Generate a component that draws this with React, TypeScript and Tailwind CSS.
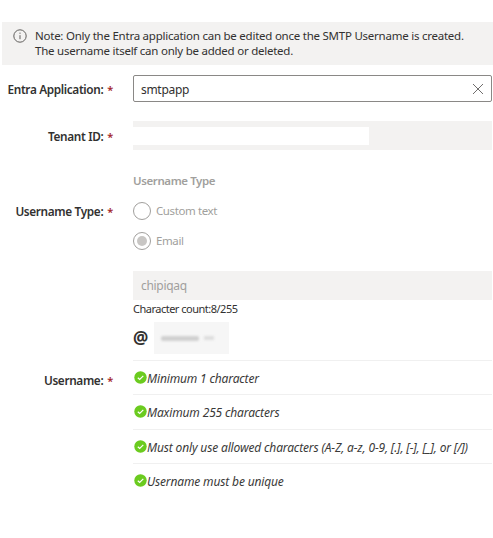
const font = "[font-family:'Noto_Sans',sans-serif]";

const Label = ({ text }: { text: string }) => (
  <div className="w-[113px] shrink-0 flex justify-end items-baseline gap-[4px] text-[11.8px] font-semibold tracking-[-0.35px] text-[#323130] whitespace-nowrap">
    <span>{text}</span>
    <span className="text-[#a4262c] text-[11px]">*</span>
  </div>
);

const Check = () => (
  <svg width="13" height="13" viewBox="0 0 13 13" className="shrink-0">
    <circle cx="6.5" cy="6.5" r="6.2" fill="#6bcb1f" />
    <path d="M3.8 6.7l1.9 1.8 3.6-3.6" fill="none" stroke="#fff" strokeWidth="1.2" />
  </svg>
);

const rules = [
  "Minimum 1 character",
  "Maximum 255 characters",
  "Must only use allowed characters (A-Z, a-z, 0-9, [.], [-], [_], or [/])",
  "Username must be unique",
];

export default function App() {
  return (
    <div className={`${font} w-[493px] h-[538px] bg-white overflow-hidden pt-[22px] text-[12px] leading-[16px]`}>
      <div className="ml-[2px] h-[43px] bg-[#f3f2f1] flex items-start pl-[11px] pt-[6px] text-[11.5px] leading-[15px] tracking-[-0.24px] text-[#323130]">
        <svg width="14" height="14" viewBox="0 0 14 14" className="shrink-0 mt-[1px] mr-[8px]" fill="none" stroke="#605e5c">
          <circle cx="7" cy="7" r="6.2" />
          <path d="M7 6.2v4M7 3.6v1.2" />
        </svg>
        <div>
          <div className="whitespace-nowrap">Note: Only the Entra application can be edited once the SMTP Username is created.</div>
          <div className="whitespace-nowrap">The username itself can only be added or deleted.</div>
        </div>
      </div>

      <div className="flex items-center mt-[10px] gap-[20px] pr-[1px]">
        <div className="pt-[2px]">
          <Label text="Entra Application:" />
        </div>
        <div className="flex-1 h-[27px] border border-[#8a8886] rounded-[2px] flex items-center justify-between pl-[7px] pr-[7px] text-[#323130] tracking-[-0.3px]">
          <span className="pt-[2px]">smtpapp</span>
          <svg width="12" height="12" viewBox="0 0 12 12" stroke="#605e5c" strokeWidth="0.9">
            <path d="M1 1l10 10M11 1L1 11" />
          </svg>
        </div>
      </div>

      <div className="flex items-center mt-[19px] gap-[20px] pr-[1px]">
        <div className="pt-[2px]">
          <Label text="Tenant ID:" />
        </div>
        <div className="flex-1 h-[29px] bg-[#f3f2f1] flex items-center">
          <div className="w-[236px] h-[18px] bg-white" />
        </div>
      </div>

      <div className="flex mt-[23px] gap-[20px] pr-[1px]">
        <div className="pt-[30px]">
          <Label text="Username Type:" />
        </div>
        <div className="flex-1">
          <div className="font-semibold text-[11.5px] tracking-[-0.4px] text-[#a19f9d] h-[16px]">Username Type</div>
          <div className="mt-[14px] flex items-center gap-[5px] h-[16px] text-[11.5px] tracking-[-0.4px] text-[#a19f9d]">
            <span className="w-[18px] h-[18px] rounded-full border border-[#a19f9d]" />
            Custom text
          </div>
          <div className="mt-[14px] flex items-center gap-[5px] h-[16px] text-[11.5px] tracking-[-0.4px] text-[#a19f9d]">
            <span className="w-[18px] h-[18px] rounded-full border border-[#a19f9d] flex items-center justify-center">
              <span className="w-[10px] h-[10px] rounded-full bg-[#c8c6c4]" />
            </span>
            Email
          </div>
          <div className="mt-[22px] h-[29px] bg-[#f3f2f1] flex items-center pl-[8px] tracking-[-0.3px] text-[#a19f9d]">chipiqaq</div>
          <div className="mt-[1px] h-[16px] text-[11px] tracking-[-0.5px] text-[#323130]">Character count:8/255</div>
          <div className="mt-[5px] flex items-center h-[32px]">
            <span className="w-[21px] text-[17px] font-bold text-[#323130]">@</span>
            <div className="w-[75px] h-[32px] bg-[#f6f6f6] flex items-center pl-[7px] gap-[5px]">
              <span className="w-[38px] h-[5px] rounded-[2px] bg-[#d0d0d0] blur-[1px]" />
              <span className="w-[10px] h-[4px] bg-[#dedede] blur-[1px]" />
            </div>
          </div>
        </div>
      </div>

      <div className="flex mt-[6px] gap-[20px] pr-[1px]">
        <div className="pt-[12px]">
          <Label text="Username:" />
        </div>
        <div className="flex-1 text-[12px] tracking-[-0.15px] italic text-[#3b3a39]">
          {rules.map((r) => (
            <div key={r} className="h-[34.3px] border-t border-[#f0f0f0] flex items-start pt-[10px] pl-[1px] whitespace-nowrap">
              <Check />
              <span>{r}</span>
            </div>
          ))}
        </div>
      </div>
    </div>
  );
}
